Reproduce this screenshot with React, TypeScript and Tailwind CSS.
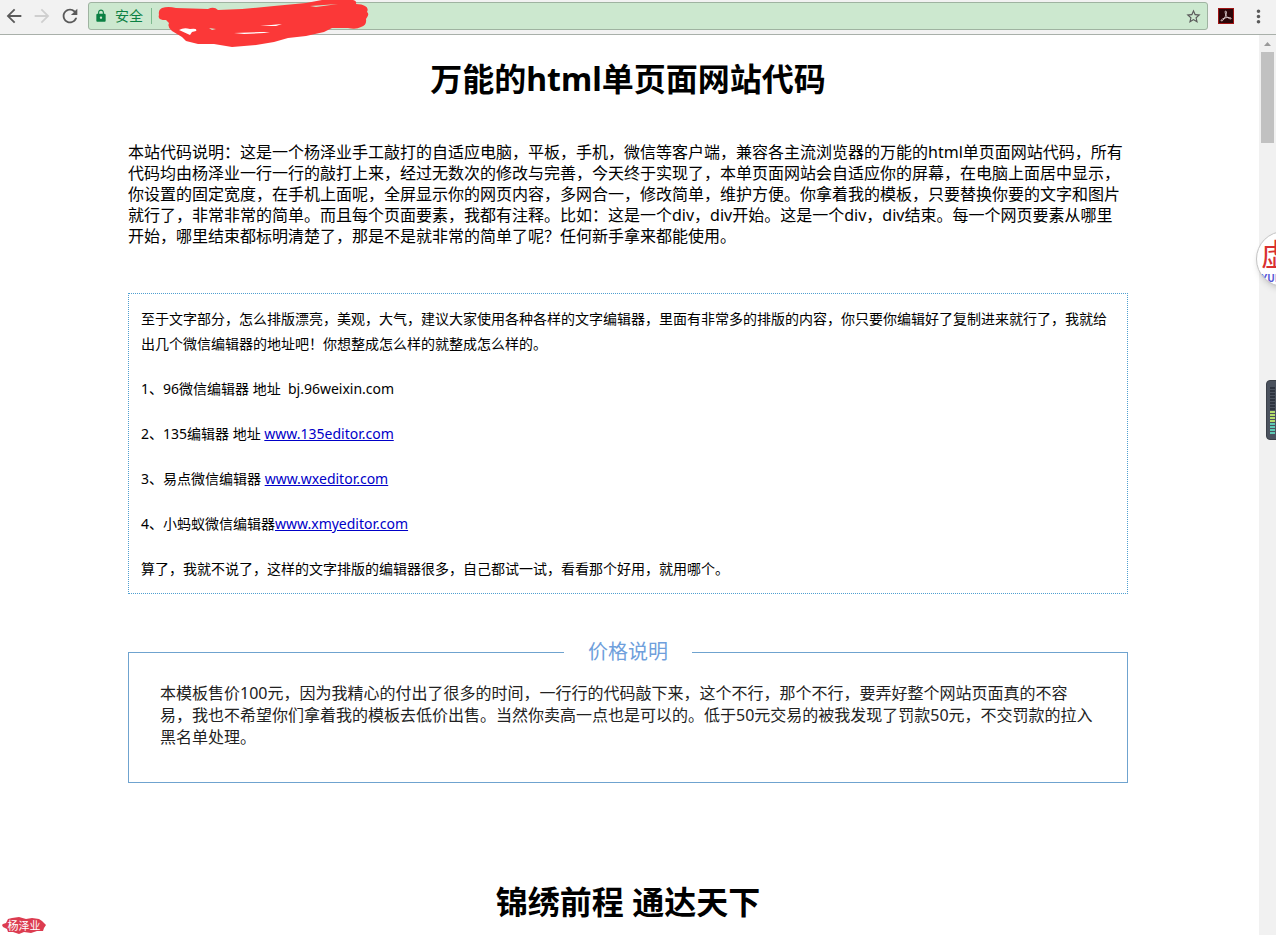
import {
  MdArrowBack,
  MdArrowForward,
  MdLock,
  MdMoreVert,
  MdRefresh,
  MdStarBorder,
} from "react-icons/md";

const Scribble = () => {
  return (
    <svg
      className="pointer-events-none absolute left-[156px] top-0 z-10"
      width="216"
      height="48"
      viewBox="0 0 216 48"
      aria-hidden="true"
    >
      <path
        fill="#fb3838"
        d="M6 8Q12 6 20 8L52 9Q58 6 62 10L86 9L118 6L150 3L166 0H197Q201 1 200 4Q206 4 209 6Q213 8 211 12Q214 14 210 19Q211 25 205 27Q200 30 192 28L176 28L168 32L150 36L132 38L118 42L100 45L76 47L58 44L42 44L30 41L26 37L16 31Q11 27 13 23L10 20Q1 20 3 15Q2 10 6 8Z"
      />
      <path
        fill="#fff"
        d="M23 30Q28 27 34 29Q42 28 40 31L36 32L34 35ZM78 33L104 32L114 32L108 33L88 34ZM104 26L126 24L120 26Z"
      />
      <path fill="#cce8cf" d="M154 6L182 4L160 7ZM53 28L60 29L56 30Z" />
    </svg>
  );
};

const AcrobatIcon = () => {
  return (
    <svg width="16" height="16" viewBox="0 0 16 16" aria-hidden="true">
      <rect x="0.5" y="0.5" width="15" height="15" fill="#2c0608" stroke="#a01414" />
      <path
        d="M7.6 3C9 3 8.400 6.200 7.200 8.800C6 11.500 4.300 13.400 3.300 12.900C2.300 12.200 4.800 10.300 8 9.700C10.500 9.200 13.300 9.500 13.200 10.500C13 11.500 10.300 10.500 8.800 8.500C7.300 6.500 6.600 3.200 7.600 3Z"
        fill="none"
        stroke="#e3d5d5"
        strokeWidth="0.9"
      />
    </svg>
  );
};

const Toolbar = () => {
  return (
    <header className="relative flex h-[35px] shrink-0 items-center border-b border-[#a9b0aa] bg-[#f2f2f2] pb-0.5 text-[#5a5a5a]">
      <div className="flex w-[88px] shrink-0 items-center gap-1.5 pl-[3px]">
        <button aria-label="后退">
          <MdArrowBack size={22} />
        </button>
        <button aria-label="前进" className="text-[#cfcfcf]">
          <MdArrowForward size={22} />
        </button>
        <button aria-label="刷新">
          <MdRefresh size={22} />
        </button>
      </div>
      <div className="flex h-7 flex-grow items-center rounded-[3px] border border-[#9fb3a1] bg-[#cce8cf] px-[5px]">
        <MdLock size={14} className="text-[#0b8043]" />
        <span className="ml-[7px] text-sm text-[#0b8043]">安全</span>
        <span className="ml-2 h-4 w-px bg-[#7dba8e]" />
        <input
          aria-label="地址栏"
          className="min-w-0 flex-grow bg-transparent px-2 text-sm outline-none"
        />
        <button aria-label="收藏">
          <MdStarBorder size={17} />
        </button>
      </div>
      <div className="flex shrink-0 items-center gap-[14px] pl-[10px] pr-[7px]">
        <button aria-label="Acrobat">
          <AcrobatIcon />
        </button>
        <button aria-label="菜单">
          <MdMoreVert size={21} />
        </button>
      </div>
      <Scribble />
    </header>
  );
};

const Scrollbar = () => {
  return (
    <div className="flex w-[17px] shrink-0 flex-col items-center bg-[#f1f1f1]">
      <div className="flex h-[17px] items-center justify-center">
        <svg width="7" height="4" viewBox="0 0 7 4" aria-hidden="true">
          <path d="M3.5 0L7 4H0Z" fill="#9a9a9a" />
        </svg>
      </div>
      <div className="h-[91px] w-[13px] bg-[#c1c1c1]" />
    </div>
  );
};

const editors = [
  { label: "2、135编辑器 地址 ", url: "www.135editor.com" },
  { label: "3、易点微信编辑器 ", url: "www.wxeditor.com" },
  { label: "4、小蚂蚁微信编辑器", url: "www.xmyeditor.com" },
];

const EditorBox = () => {
  return (
    <section className="mt-[46px] flex flex-col gap-5 border border-dotted border-[#4f9fd0] px-3 py-3 text-sm leading-[25px]">
      <p>
        至于文字部分，怎么排版漂亮，美观，大气，建议大家使用各种各样的文字编辑器，里面有非常多的排版的内容，你只要你编辑好了复制进来就行了，我就给出几个微信编辑器的地址吧！你想整成怎么样的就整成怎么样的。
      </p>
      <p>1、96微信编辑器 地址&nbsp; bj.96weixin.com</p>
      {editors.map((item) => (
        <p key={item.url}>
          {item.label}
          <a href={"http://" + item.url} className="text-[#0000c8] underline">
            {item.url}
          </a>
        </p>
      ))}
      <p>
        算了，我就不说了，这样的文字排版的编辑器很多，自己都试一试，看看那个好用，就用哪个。
      </p>
    </section>
  );
};

const PriceBox = () => {
  return (
    <fieldset className="mt-[42px] border border-[#6fa3cf] px-[31px] pb-[34px] pt-[14px]">
      <legend className="mx-auto px-6 text-xl leading-[32px] text-[#6f9fdc]">
        价格说明
      </legend>
      <p className="leading-[22px] text-[#222]">
        本模板售价100元，因为我精心的付出了很多的时间，一行行的代码敲下来，这个不行，那个不行，要弄好整个网站页面真的不容易，我也不希望你们拿着我的模板去低价出售。当然你卖高一点也是可以的。低于50元交易的被我发现了罚款50元，不交罚款的拉入黑名单处理。
      </p>
    </fieldset>
  );
};

const FloatingWidgets = () => {
  return (
    <>
      <button
        aria-label="虚拟助手"
        className="absolute -right-[36px] top-[196px] flex h-[56px] w-[56px] flex-col justify-center overflow-hidden rounded-full border border-[#c4c4c4] bg-white pl-1 pt-1 text-left shadow-md"
      >
        <span className="text-[30px] leading-[34px] text-[#d93030]">虚</span>
        <span className="text-[10px] font-bold leading-[14px] text-[#5a5ad6]">YUN</span>
      </button>
      <div className="absolute -right-1 top-[345px] flex h-[60px] w-[14px] flex-col justify-center gap-px rounded-[4px] border border-[#3b4048] bg-[#4b525e] pl-[3px]">
        {Array.from({ length: 16 }, (_, i) => (
          <span
            key={i}
            className={
              "h-[2px] w-[5px] " +
              (i < 8 ? "bg-[#2e3440]" : i < 12 ? "bg-[#b4dc6c]" : "bg-[#5fc8b4]")
            }
          />
        ))}
      </div>
      <div className="absolute bottom-0 left-[2px] flex h-[19px] w-11 items-center justify-center">
        <svg
          className="absolute inset-0"
          width="44"
          height="19"
          viewBox="0 0 44 19"
          aria-hidden="true"
        >
          <path
            fill="#dc3c50"
            d="M1 8L4 7L6 3L10 2L17 1L24 3L30 2L37 3L40 5L42 7L44 9L42 12L41 15L35 15L29 17L22 16L17 18L11 16L6 16L5 13L1 11L0 9Z"
          />
        </svg>
        <span className="relative text-[11px] leading-none text-white">
          杨泽业
        </span>
      </div>
    </>
  );
};

const App = () => {
  return (
    <div className="flex h-screen flex-col overflow-hidden bg-white font-['Noto_Sans','Noto_Sans_CJK_SC',sans-serif] text-black">
      <Toolbar />
      <div className="relative flex min-h-0 flex-grow overflow-hidden">
        <main className="min-w-0 flex-grow overflow-hidden pr-[3px]">
          <div className="mx-auto max-w-[1000px]">
            <h1 className="mt-[22px] text-center text-[32px] font-bold leading-[44px]">
              万能的html单页面网站代码
            </h1>
            <p className="mt-[41px] leading-[21px]">
              本站代码说明：这是一个杨泽业手工敲打的自适应电脑，平板，手机，微信等客户端，兼容各主流浏览器的万能的html单页面网站代码，所有代码均由杨泽业一行一行的敲打上来，经过无数次的修改与完善，今天终于实现了，本单页面网站会自适应你的屏幕，在电脑上面居中显示，你设置的固定宽度，在手机上面呢，全屏显示你的网页内容，多网合一，修改简单，维护方便。你拿着我的模板，只要替换你要的文字和图片就行了，非常非常的简单。而且每个页面要素，我都有注释。比如：这是一个div，div开始。这是一个div，div结束。每一个网页要素从哪里开始，哪里结束都标明清楚了，那是不是就非常的简单了呢？任何新手拿来都能使用。
            </p>
            <EditorBox />
            <PriceBox />
            <h1 className="mt-[97px] text-center text-[32px] font-bold leading-[44px]">
              锦绣前程 通达天下
            </h1>
          </div>
        </main>
        <Scrollbar />
        <FloatingWidgets />
      </div>
    </div>
  );
};

export default App;
